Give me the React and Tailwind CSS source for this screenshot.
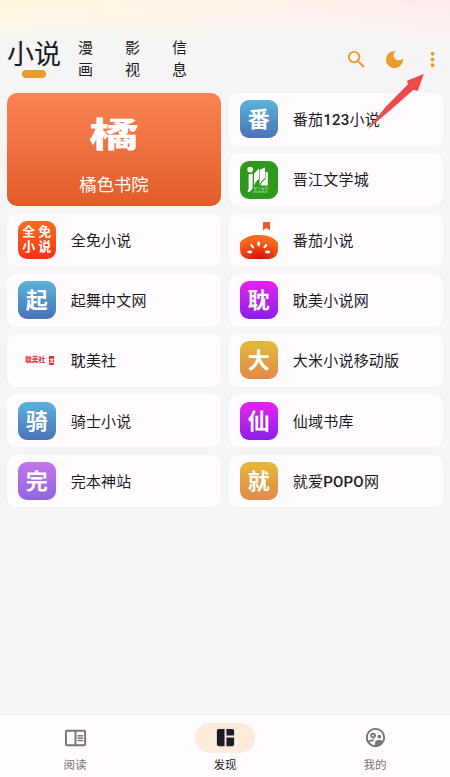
import {
  MdSearch,
  MdDarkMode,
  MdMoreVert,
  MdOutlineChromeReaderMode,
  MdSpaceDashboard,
  MdOutlineSupervisedUserCircle,
} from 'react-icons/md'

const blue = 'from-[#5ab3d9] to-[#4a72b8]'
const magenta = 'from-[#e81cf2] to-[#8a1ce8]'
const gold = 'from-[#e3b935] to-[#e08a4a]'
const violet = 'from-[#c474ea] to-[#8f66e0]'

const LetterIcon = ({ char, colors }) => (
  <div className={`flex size-[38px] items-center justify-center rounded-[9px] bg-linear-to-b ${colors}`}>
    <span className="pt-[1.5px] text-[22px] leading-none font-bold text-white">{char}</span>
  </div>
)

const JinjiangIcon = () => (
  <svg viewBox="0 0 38 38" className="size-[38px]">
    <rect width="38" height="38" rx="9" fill="#2e9a1b" />
    <circle cx="10.2" cy="8.6" r="2.9" fill="#fff" />
    <path d="M8.600 13.500l4-1v13.500c0 3-2 4.800-5.400 5.200.8-1.400 1.400-2.600 1.400-4.700z" fill="#fff" />
    <path d="M14 12.500 19 7.500v10.500c-2.600 1.800-4.200 4-5 7z" fill="#fff" />
    <path d="M19.600 9 25 6.500V17c-2.600 1.800-4.600 4.200-5.400 7.200z" fill="#fff" />
    <path d="M25.600 10.800l2.200.4v13.300H20.500c1.200-3 2.800-5 5.100-6.500z" fill="#fff" />
    <text x="13.2" y="29.900" fontSize="4.9" textLength="15" lengthAdjust="spacingAndGlyphs" fill="#b9dfb2">晋江文学</text>
    <path d="M12 31.200h15.500" stroke="#a5d69c" strokeWidth=".6" />
  </svg>
)

const TomatoIcon = () => (
  <svg viewBox="0 0 38 38" className="size-[38px]">
    <defs>
      <radialGradient id="tomato" cx=".5" cy="1" r=".8">
        <stop offset="0" stopColor="#d60a06" />
        <stop offset="1" stopColor="#fb6a1c" />
      </radialGradient>
      <clipPath id="tile">
        <rect width="38" height="38" rx="9" />
      </clipPath>
    </defs>
    <g clipPath="url(#tile)">
      <rect width="38" height="38" fill="#fff" />
      <path d="M0 21.500c3.500-4 9-7.500 19-7.500s15.500 3.500 19 7.500V38H0z" fill="url(#tomato)" />
    </g>
    <path d="M23 1h7v8.300L26.500 7 23 9.300z" fill="#f0562b" />
    <g fill="#fff">
      <ellipse cx="18.700" cy="22.600" rx="1.400" ry="2.700" />
      <ellipse cx="12.200" cy="25.200" rx="1.300" ry="2.600" transform="rotate(-38 12.200 25.200)" />
      <ellipse cx="25.300" cy="25.200" rx="1.300" ry="2.600" transform="rotate(38 25.300 25.200)" />
      <ellipse cx="9.800" cy="31" rx="2.600" ry="1.400" />
      <ellipse cx="27.600" cy="31" rx="2.600" ry="1.400" />
    </g>
  </svg>
)

const QuanmianIcon = () => (
  <div className="grid size-[38px] grid-cols-2 content-center justify-items-center rounded-[9px] bg-linear-to-b from-[#fa6a1b] to-[#fd2c1b] px-[3px] text-[13px] leading-[14.5px] font-bold text-white">
    <span>全</span>
    <span>免</span>
    <span>小</span>
    <span>说</span>
  </div>
)

const DanmeiIcon = () => (
  <div className="flex size-[38px] items-center justify-end pr-[1.5px] text-[#ee3338]">
    <span className="mr-1 text-[6.7px] leading-none font-black whitespace-nowrap">耽美社</span>
    <span className="flex h-[9px] w-[5px] items-center justify-center overflow-hidden rounded-[1px] bg-[#f02028] text-[5px] leading-none font-bold text-white">
      文
    </span>
  </div>
)

const left = [
  { name: '全免小说', icon: <QuanmianIcon /> },
  { name: '起舞中文网', icon: <LetterIcon char="起" colors={blue} /> },
  { name: '耽美社', icon: <DanmeiIcon /> },
  { name: '骑士小说', icon: <LetterIcon char="骑" colors={blue} /> },
  { name: '完本神站', icon: <LetterIcon char="完" colors={violet} /> },
]

const right = [
  { name: '番茄123小说', icon: <LetterIcon char="番" colors={blue} /> },
  { name: '晋江文学城', icon: <JinjiangIcon /> },
  { name: '番茄小说', icon: <TomatoIcon /> },
  { name: '耽美小说网', icon: <LetterIcon char="耽" colors={magenta} /> },
  { name: '大米小说移动版', icon: <LetterIcon char="大" colors={gold} /> },
  { name: '仙域书库', icon: <LetterIcon char="仙" colors={magenta} /> },
  { name: '就爱POPO网', icon: <LetterIcon char="就" colors={gold} /> },
]

// Latin letters and digits are set a step heavier than the Chinese text
const SourceCard = ({ name, icon }) => (
  <div className="flex h-[52.7px] items-center gap-[15px] rounded-[10px] bg-[#fffbff] pl-[11px]">
    {icon}
    <span className="pt-[2.5px] text-[15px] leading-none tracking-[0.2px] text-[#1c1b1f]">
      {name.split(/([A-Z0-9]+)/).map((part, i) =>
        i % 2 ? (
          <span key={i} className="font-medium">
            {part}
          </span>
        ) : (
          part
        )
      )}
    </span>
  </div>
)

const tabs = ['漫画', '影视', '信息']

const Header = () => (
  <header className="flex h-[93px] items-start pt-9 pl-[7px]">
    <div className="flex w-[54px] flex-col items-center">
      <h1 className="text-[27px] leading-[38px] whitespace-nowrap text-[#1c1b1f]">小说</h1>
      <div className="-mt-1 h-[7.5px] w-6 rounded-full bg-[#e99b2d]" />
    </div>
    <nav className="ml-[17px] flex gap-8 pt-px">
      {tabs.map((tab) => (
        <span key={tab} className="w-[15px] text-[15px] leading-[22px] text-[#1c1b1f]">
          {tab}
        </span>
      ))}
    </nav>
    <div className="mt-3 mr-[6.5px] ml-auto flex items-center gap-[15px] text-[#e99b2d]">
      <MdSearch size={23} />
      <MdDarkMode size={23} />
      <MdMoreVert size={23} />
    </div>
  </header>
)

const navItems = [
  { label: '阅读', Icon: MdOutlineChromeReaderMode },
  { label: '发现', Icon: MdSpaceDashboard, active: true },
  { label: '我的', Icon: MdOutlineSupervisedUserCircle },
]

const BottomNav = () => (
  <nav className="grid h-[63px] grid-cols-3 border-t border-[#efeeef] bg-[#fffbff]">
    {navItems.map(({ label, Icon, active }) => (
      <div
        key={label}
        className={`flex flex-col items-center pt-2 ${active ? 'text-[#1c1b2b]' : 'text-[#757477]'}`}
      >
        <div className={`flex h-[30px] w-[60px] items-center justify-center rounded-full pb-px ${active ? 'bg-[#fdecdc]' : ''}`}>
          <Icon size={23} />
        </div>
        <span className="mt-1 text-[11.5px] leading-4">{label}</span>
      </div>
    ))}
  </nav>
)

const App = () => (
  <div className="relative flex h-[777px] w-[450px] flex-col overflow-hidden bg-[#f5f5f5] bg-[linear-gradient(to_bottom,#f5f5f500,#f5f5f5_46px),linear-gradient(to_right,#fff7dc,#fff3e6_50%,#ffeaea)] font-['Roboto','Noto_Sans_CJK_SC',sans-serif]">
    <Header />

    <main className="grid flex-1 grid-cols-2 content-start gap-x-[7.7px] px-[6.7px]">
      <div className="flex flex-col gap-[7.6px]">
        <div className="flex h-[113px] flex-col items-center rounded-[10px] bg-linear-to-b from-[#f98353] to-[#e35c28] text-white">
          <span className="mt-[18.5px] scale-y-[.7] text-[49px] leading-[48px] font-black">橘</span>
          <span className="mt-[13.5px] text-[17.3px] leading-6">橘色书院</span>
        </div>
        {left.map((item) => (
          <SourceCard key={item.name} {...item} />
        ))}
      </div>
      <div className="flex flex-col gap-[7.6px]">
        {right.map((item) => (
          <SourceCard key={item.name} {...item} />
        ))}
      </div>
    </main>

    <BottomNav />

    {/* Arrow pointing at the overflow menu */}
    <svg viewBox="0 0 60 60" className="absolute top-[72px] left-[366px] size-[60px]">
      <path d="M1.500 57.600 20 34.500 42 12.300 41 8.800 57.800 2 51.700 19 47.500 17.800 24 38.500z" fill="#ec4b4b" />
    </svg>
  </div>
)

export default App
